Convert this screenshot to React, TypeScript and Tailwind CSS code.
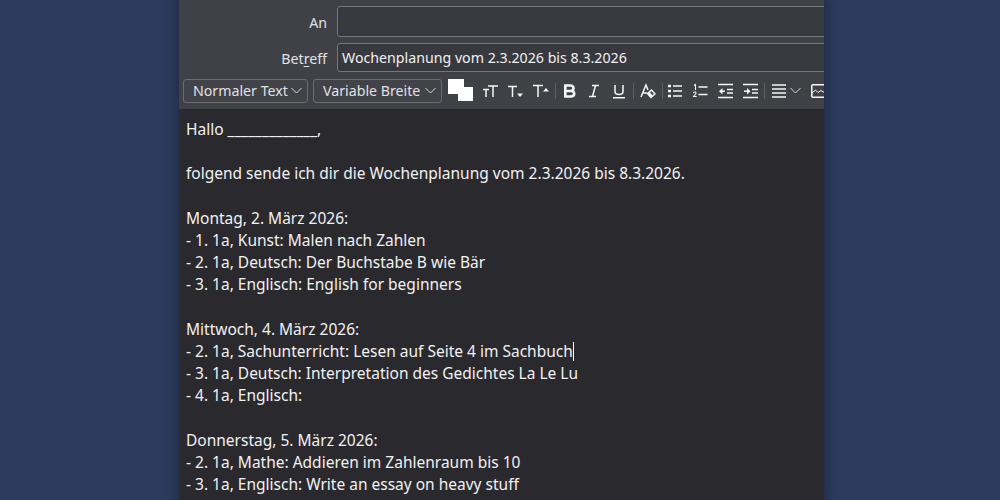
const lines = [
  "Hallo _____________,",
  "",
  "folgend sende ich dir die Wochenplanung vom 2.3.2026 bis 8.3.2026.",
  "",
  "Montag, 2. März 2026:",
  "- 1. 1a, Kunst: Malen nach Zahlen",
  "- 2. 1a, Deutsch: Der Buchstabe B wie Bär",
  "- 3. 1a, Englisch: English for beginners",
  "",
  "Mittwoch, 4. März 2026:",
  "- 2. 1a, Sachunterricht: Lesen auf Seite 4 im Sachbuch",
  "- 3. 1a, Deutsch: Interpretation des Gedichtes La Le Lu",
  "- 4. 1a, Englisch:",
  "",
  "Donnerstag, 5. März 2026:",
  "- 2. 1a, Mathe: Addieren im Zahlenraum bis 10",
  "- 3. 1a, Englisch: Write an essay on heavy stuff",
];

function Chevron({ className = "" }: { className?: string }) {
  return (
    <svg width="11" height="7" viewBox="0 0 11 7" className={`shrink-0 ${className}`} fill="none" stroke="#d8d9db" strokeWidth="1">
      <path d="M0.5 1 L5.5 6 L10.5 1" />
    </svg>
  );
}

function Sep() {
  return <div className="w-px h-[16px] bg-[#5c5e63] shrink-0" />;
}

function Ico({ children, w = 16 }: { children: React.ReactNode; w?: number }) {
  return (
    <svg width={w} height="16" viewBox={`0 0 ${w} 16`} fill="none" stroke="#f6f6f7" strokeWidth="1.5" className="shrink-0">
      {children}
    </svg>
  );
}

function Dropdown({ label, w }: { label: string; w: string }) {
  return (
    <div className={`${w} h-[24px] shrink-0 rounded-[3px] border border-[#6a6c70] bg-[#414349] flex items-center justify-between pl-[9px] pr-[5px] text-[14.2px] text-[#e0e0e2]`}>
      <span>{label}</span>
      <Chevron />
    </div>
  );
}

export default function App() {
  return (
    <div className="w-[1000px] h-[500px] overflow-hidden bg-[#2c3b5e] flex pl-[179px] font-['Noto_Sans',sans-serif]">
      <div className="w-[645px] shrink-0 h-full flex flex-col bg-[#3f4146] shadow-[0_0_10px_4px_rgba(20,25,40,0.4)] overflow-hidden">
        <div className="flex items-center h-[31px] mt-[6px] shrink-0">
          <div className="w-[148px] pt-[3px] text-right text-[14.2px] text-[#e2e2e4]">An</div>
          <div className="ml-[10px] flex-1 h-[31px] -mr-[4px] rounded-[3px] border border-[#75777b] bg-[#38393e]" />
        </div>
        <div className="flex items-center h-[29px] mt-[6px] shrink-0">
          <div className="w-[148px] pt-[2px] text-right text-[14.2px] text-[#e2e2e4]">
            Bet<span className="underline underline-offset-2">r</span>eff
          </div>
          <div className="ml-[10px] flex-1 h-[29px] -mr-[4px] rounded-[3px] border border-[#75777b] bg-[#38393e] flex items-center pl-[4px] text-[14.2px] text-[#f0f0f1]">
            Wochenplanung vom 2.3.2026 bis 8.3.2026
          </div>
        </div>
        <div className="flex items-center h-[37px] pl-[4px] shrink-0 overflow-hidden">
          <Dropdown label="Normaler Text" w="w-[125px]" />
          <div className="w-[5px] shrink-0" />
          <Dropdown label="Variable Breite" w="w-[129px]" />
          <div className="relative w-[25px] h-[22px] ml-[6px] shrink-0 -mt-[2px]">
            <div className="absolute left-[10px] top-[8px] w-[15px] h-[14px] bg-white" />
            <div className="absolute left-0 top-0 w-[16px] h-[15px] bg-white" />
          </div>
          <div className="flex items-center ml-[9px]">
            <Ico><path d="M1 6.5H7M4 6.5V14M6 3H16M11 3V14" /></Ico>
            <div className="w-[9px]" />
            <Ico><path d="M1 3.5H10M5.5 3.5V14" /><path d="M10 10.5H16L13 14Z" fill="#f6f6f7" stroke="none" /></Ico>
            <div className="w-[9px]" />
            <Ico w={17}><path d="M1 2.5H11M6 2.5V14" /><path d="M11 8.5H17L14 5Z" fill="#f6f6f7" stroke="none" /></Ico>
            <div className="w-[6px]" />
            <Sep />
            <div className="w-[5px]" />
            <Ico><path strokeWidth="2.6" d="M3.5 2.5H9.5C13.5 2.5 13.5 8 9.5 8H3.5M9.5 8C14.5 8 14.5 13.5 9.5 13.5H3.5M4.3 1.5V14.5" /></Ico>
            <div className="w-[9px]" />
            <Ico><path d="M6 2.5H13M3 13.5H10M9.5 2.5L6.5 13.5" /></Ico>
            <div className="w-[9px]" />
            <Ico><path d="M4 2V8.5C4 12.5 12 12.5 12 8.5V2M2 14.7H14" /></Ico>
            <div className="w-[6px]" />
            <Sep />
            <div className="w-[6px]" />
            <Ico><path d="M1 14L6 2L8 7" /><path d="M3 10H7" /><path d="M7.5 10.5L11.5 7L15 11L11 14.5Z" /><path d="M7.5 10.5L11 14.5L13 12.7L9.6 8.9Z" fill="#f6f6f7" stroke="none" /></Ico>
            <div className="w-[6px]" />
            <Sep />
            <div className="w-[5px]" />
            <Ico><path strokeWidth="1.6" d="M5 3H14M5 8H14M5 13H14" /><path strokeWidth="2.4" d="M0 3H3M0 8H3M0 13H3" /></Ico>
            <div className="w-[9px]" />
            <svg width="16" height="16" viewBox="0 0 16 16" fill="none" stroke="#f6f6f7" className="shrink-0">
              <path strokeWidth="1.1" d="M1 2.5L2.5 1.5V7M0.3 9.8C1.5 8.3 3.5 9 2.9 10.5L0.5 13.5H3.7" />
              <path strokeWidth="1.6" d="M5.5 4H14.5M5.5 11.5H14.5" />
            </svg>
            <div className="w-[9px]" />
            <Ico><path strokeWidth="1.6" d="M0 1.5H15M0 14.5H15M9 6.5H15M9 10H15" /><path d="M7 8.2H2" /><path d="M4.5 5L1 8.2L4.5 11.5Z" fill="#f6f6f7" stroke="none" /></Ico>
            <div className="w-[9px]" />
            <Ico><path strokeWidth="1.6" d="M0 1.5H15M0 14.5H15M9 6.5H15M9 10H15" /><path d="M1 8.2H5" /><path d="M4 5L7.5 8.2L4 11.5Z" fill="#f6f6f7" stroke="none" /></Ico>
            <div className="w-[5px]" />
            <Sep />
            <div className="w-[7px]" />
            <Ico w={14}><path strokeWidth="1.6" d="M0 2H14M0 6H14M0 10H14M0 14H14" /></Ico>
            <div className="w-[4px]" />
            <Chevron />
            <div className="w-[10px]" />
            <svg width="14" height="16" viewBox="0 0 14 16" fill="none" stroke="#f6f6f7" strokeWidth="1.5" className="shrink-0">
              <rect x="0.8" y="1.8" width="17" height="12.4" rx="1" />
              <path d="M1 10L4.5 7L7 9.5L10 7.5L14 10" strokeWidth="1" />
            </svg>
          </div>
        </div>
        <div className="flex-1 bg-[#2a2a2e] pl-[7px] pt-[9px] text-[15.5px] text-[#f1f1f2]">
          {lines.map((l, i) => (
            <div key={i} className="h-[22.2px] leading-[22.2px] whitespace-pre">
              {l}
              {i === 10 && <span className="inline-block w-px h-[19px] bg-white align-[-4px]" />}
            </div>
          ))}
        </div>
      </div>
    </div>
  );
}
